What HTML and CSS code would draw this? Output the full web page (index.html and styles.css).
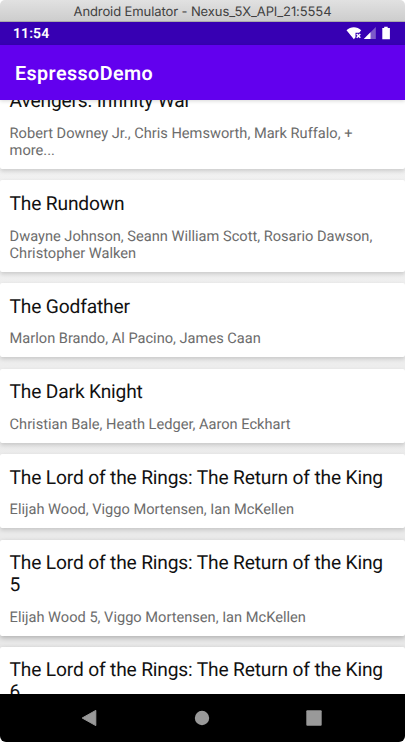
FILE: index.html
```html
<!DOCTYPE html>
<html lang="en">
<head>
<meta charset="utf-8">
<title>EspressoDemo</title>
<link rel="stylesheet" href="styles.css">
</head>
<body>
<div class="window">
  <header class="titlebar"><span class="titlebar-text">Android Emulator - Nexus_5X_API_21:5554</span></header>
  <div class="statusbar">
    <span class="clock">11:54</span>
    <svg class="status-icons" width="46" height="16" viewBox="0 0 46 16">
      <path d="M.5 4.200C4.500.2 11.200.2 15.200 4.200L13.200 6.800H9.500V11.200L7.900 13.200Z" fill="#fff"/>
      <path d="M10.700 7.900l3.600 3.800m0-3.800l-3.600 3.800" stroke="#fff" stroke-width="1.500"/>
      <path d="M17.800 13L29.800 1V13Z" fill="#7c59c9"/>
      <path d="M17.800 13L24.500 6.300V13Z" fill="#fff"/>
      <path d="M36.300 2h1.900V.7h3.500V2h2.200V13.300h-7.600Z" fill="#fff"/>
    </svg>
  </div>
  <div class="appbar"><h1 class="app-title">EspressoDemo</h1></div>
  <main class="list">
    <article class="card"><h2 class="title">Avengers: Infinity War</h2><p class="cast">Robert Downey Jr., Chris Hemsworth, Mark Ruffalo, +<br>more...</p></article>
    <article class="card"><h2 class="title">The Rundown</h2><p class="cast">Dwayne Johnson, Seann William Scott, Rosario Dawson,<br>Christopher Walken</p></article>
    <article class="card"><h2 class="title">The Godfather</h2><p class="cast">Marlon Brando, Al Pacino, James Caan</p></article>
    <article class="card"><h2 class="title">The Dark Knight</h2><p class="cast">Christian Bale, Heath Ledger, Aaron Eckhart</p></article>
    <article class="card"><h2 class="title">The Lord of the Rings: The Return of the King</h2><p class="cast">Elijah Wood, Viggo Mortensen, Ian McKellen</p></article>
    <article class="card deep"><h2 class="title">The Lord of the Rings: The Return of the King<br>5</h2><p class="cast">Elijah Wood 5, Viggo Mortensen, Ian McKellen</p></article>
    <article class="card deep"><h2 class="title">The Lord of the Rings: The Return of the King<br>6</h2></article>
  </main>
  <nav class="navbar">
    <svg width="16" height="18" viewBox="0 0 16 18"><path d="M1.200 9L14.800 1.400V16.600Z" fill="#999" stroke="#999" stroke-linejoin="round"/></svg>
    <svg width="16" height="18" viewBox="0 0 16 18"><circle cx="8" cy="9" r="7.200" fill="#999"/></svg>
    <svg width="16" height="18" viewBox="0 0 16 18"><rect x=".3" y="1.200" width="15.400" height="15.600" rx="1" fill="#999"/></svg>
  </nav>
</div>
</body>
</html>
```
FILE: styles.css
```css
* { box-sizing: border-box; }
body { margin: 0; background: #fff; font-family: Roboto, sans-serif; text-rendering: geometricPrecision; }
.window {
  width: 405px;
  height: 742px;
  overflow: hidden;
  display: flex;
  flex-direction: column;
  border-radius: 5px 5px 6px 6px;
}
.titlebar {
  height: 22px;
  flex: none;
  text-align: center;
  background: linear-gradient(#e1e1e1, #cdcdcd);
  border-bottom: 1px solid #aaa;
  color: #414141;
  font: 13px/24px Inter, sans-serif;
  letter-spacing: -0.1px;
}
.statusbar {
  height: 23px;
  flex: none;
  display: flex;
  justify-content: space-between;
  padding: 0 13px 0 13px;
  background: #3700b3;
  color: #fff;
}
.clock { font-size: 14px; font-weight: 600; line-height: 24px; letter-spacing: .1px; }
.status-icons { margin: 4px 0 0; }
.appbar {
  height: 55px;
  flex: none;
  padding-left: 15px;
  background: #6200ee;
  z-index: 1;
  box-shadow: 0 1px 4px rgba(0, 0, 0, .16);
}
.app-title { margin: 0; color: #fff; font-size: 19.700px; font-weight: 600; line-height: 57px; letter-spacing: .44px; }
.list {
  flex: 1;
  min-height: 0;
  overflow: hidden;
  display: flex;
  flex-direction: column;
  gap: 11.200px;
  background: linear-gradient(#f2f2f2, #e7e7e7);
}
.card {
  flex: none;
  padding: 12.700px 9.600px 9.600px;
  background: #fff;
  border-radius: 2px;
  box-shadow: 0 2px 4px rgba(0, 0, 0, .16);
}
.card:first-child { margin-top: -22.600px; }
.deep { box-shadow: 0 2px 5px rgba(0, 0, 0, .24); }
.title { margin: 0 0 12.900px; color: #111; font-size: 19.200px; font-weight: 400; line-height: 21.700px; letter-spacing: -.17px; white-space: nowrap; }
.cast { margin: 0; color: #6c6c6c; font-size: 14.620px; line-height: 17.400px; white-space: nowrap; }
.navbar {
  height: 48px;
  flex: none;
  display: flex;
  justify-content: center;
  align-items: center;
  gap: 96.500px;
  padding-right: 2px;
  background: #000;
}
```
